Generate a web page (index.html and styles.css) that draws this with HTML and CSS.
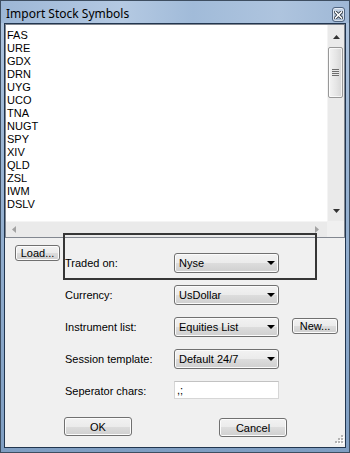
FILE: index.html
```html
<!DOCTYPE html>
<html lang="en">
<head>
  <meta charset="UTF-8" />
  <title>Import Stock Symbols</title>
  <meta name="viewport" content="width=device-width, initial-scale=1.0"/>
  <link rel="stylesheet" href="styles.css">
</head>
<body>

  <div class="window">

    <!-- Title bar -->
    <div class="titlebar">
      <span class="title">Import Stock Symbols</span>
      <div class="close-btn">
        <svg width="9" height="8" viewBox="0 0 9 8">
          <path d="M1.5 1 L7.5 7 M7.5 1 L1.5 7" stroke="#2c3640" stroke-width="3.2" stroke-linecap="square"/>
          <path d="M1.5 1 L7.5 7 M7.5 1 L1.5 7" stroke="#fff" stroke-width="1.6" stroke-linecap="square"/>
        </svg>
      </div>
    </div>

    <div class="client">

      <!-- Symbol list -->
      <div class="listbox">
        <ul class="items">
          <li>FAS</li>
          <li>URE</li>
          <li>GDX</li>
          <li>DRN</li>
          <li>UYG</li>
          <li>UCO</li>
          <li>TNA</li>
          <li>NUGT</li>
          <li>SPY</li>
          <li>XIV</li>
          <li>QLD</li>
          <li>ZSL</li>
          <li>IWM</li>
          <li>DSLV</li>
        </ul>
        <div class="vscroll">
          <div class="arrow-btn">
            <svg width="7" height="4" viewBox="0 0 7 4"><path d="M3.5 0 L7 4 L0 4 Z" fill="#333"/></svg>
          </div>
          <div class="thumb"><span class="grip"></span></div>
          <div class="track"></div>
          <div class="arrow-btn">
            <svg width="7" height="4" viewBox="0 0 7 4"><path d="M0 0 L7 0 L3.5 4 Z" fill="#333"/></svg>
          </div>
        </div>
        <div class="hscroll">
          <svg width="4" height="7" viewBox="0 0 4 7"><path d="M4 0 L4 7 L0 3.5 Z" fill="#a3a3a3"/></svg>
          <svg width="4" height="7" viewBox="0 0 4 7"><path d="M0 0 L4 3.5 L0 7 Z" fill="#a3a3a3"/></svg>
        </div>
        <div class="corner"></div>
      </div>

      <!-- Settings -->
      <div class="form">
        <button class="btn load-btn">Load...</button>

        <span class="lbl">Traded on:</span>
        <div class="combo">Nyse<span class="drop"></span></div>

        <span class="lbl">Currency:</span>
        <div class="combo">UsDollar<span class="drop"></span></div>

        <span class="lbl">Instrument list:</span>
        <div class="combo">Equities List<span class="drop"></span></div>
        <button class="btn new-btn">New...</button>

        <span class="lbl">Session template:</span>
        <div class="combo">Default 24/7<span class="drop"></span></div>

        <span class="lbl">Seperator chars:</span>
        <div class="textbox">,;</div>
      </div>

      <div class="actions">
        <button class="btn action-btn">OK</button>
        <button class="btn action-btn cancel-btn">Cancel</button>
      </div>

      <div class="highlight"></div>

      <svg class="size-grip" width="11" height="11" viewBox="0 0 11 11">
        <rect x="9" y="1" width="2" height="2" fill="#fff"/>
        <rect x="6" y="4" width="2" height="2" fill="#fff"/>
        <rect x="9" y="4" width="2" height="2" fill="#fff"/>
        <rect x="3" y="7" width="2" height="2" fill="#fff"/>
        <rect x="6" y="7" width="2" height="2" fill="#fff"/>
        <rect x="9" y="7" width="2" height="2" fill="#fff"/>
        <rect x="8" y="0" width="2" height="2" fill="#b4b4b4"/>
        <rect x="5" y="3" width="2" height="2" fill="#b4b4b4"/>
        <rect x="8" y="3" width="2" height="2" fill="#b4b4b4"/>
        <rect x="2" y="6" width="2" height="2" fill="#b4b4b4"/>
        <rect x="5" y="6" width="2" height="2" fill="#b4b4b4"/>
        <rect x="8" y="6" width="2" height="2" fill="#b4b4b4"/>
      </svg>
    </div>
  </div>

</body>
</html>
```

FILE: styles.css
```css
* { margin: 0; padding: 0; box-sizing: border-box; }
body { font-family: "Liberation Sans", Arial, sans-serif; font-size: 11px; color: #000; background: #fff; }

/* Window frame */
.window {
  width: 350px; height: 453px; display: flex; flex-direction: column;
  border: 1px solid #3e4e61; padding: 0 3px 4px;
  background: linear-gradient(to bottom, #b2c7e0 0%, #9cb6d4 30%, #7f9ec2 100%);
}

.titlebar {
  height: 22px; display: flex; justify-content: space-between; align-items: flex-start;
  padding-left: 2px; margin: 0 -3px; padding-right: 4px;
  background: linear-gradient(to right, #9db7d6 0%, #b4c9e2 35%, #a1bbd9 55%, #aec4de 80%, #9fb8d6 100%);
}
.title { font-family: "Noto Sans", sans-serif; font-size: 12px; line-height: 14px; margin-top: 6px; margin-left: 3px; color: #000; }

.close-btn {
  width: 13px; height: 15px; margin-top: 6px;
  border: 1px solid #4f6480; border-radius: 3px;
  background: linear-gradient(#c9d7e8, #9fb4cd);
  box-shadow: inset 0 0 0 1px rgba(255,255,255,0.55);
  display: flex; align-items: center; justify-content: center;
}

.client {
  flex: 1; position: relative; background: #f0f0f0;
  border: 1px solid #22364f;
}

/* List box */
.listbox {
  height: 214px; background: #fff; border: 1px solid #828790;
  display: grid; grid-template-columns: 1fr 17px; grid-template-rows: 196px 16px;
}
.items { list-style: none; padding: 4px 0 0 1px; line-height: 13px; overflow: hidden; }

.vscroll { background: #eaeaea; border-left: 1px solid #f4f4f4; display: flex; flex-direction: column; }
.arrow-btn { height: 21px; display: flex; align-items: center; justify-content: center; padding-left: 1px; }
.arrow-btn:first-child { padding-top: 3px; }
.thumb {
  height: 51px; margin: 1px 1px 0 0; border: 1px solid #989898; border-radius: 2px;
  background: linear-gradient(to right, #f4f4f4, #e4e4e4 60%, #d6d6d6);
  box-shadow: inset 0 0 0 1px rgba(255,255,255,0.7);
  display: flex; align-items: center; justify-content: center;
}
.grip {
  width: 7px; height: 7px;
  background: repeating-linear-gradient(to bottom, #6d6d6d 0, #6d6d6d 1px, #e8e8e8 1px, #e8e8e8 2px);
}
.track { flex: 1; }

.hscroll {
  background: #eaeaea; border-top: 1px solid #f4f4f4;
  display: flex; justify-content: space-between; align-items: center; padding: 0 8px 0 6px;
}
.corner { background: #f0f0f0; }

/* Form rows */
.form {
  display: grid; grid-template-columns: 50px 109px 105px 13px 46px;
  grid-auto-rows: 20px; row-gap: 12px; padding: 15px 0 0 10px; align-items: center;
}
.lbl { grid-column: 2; }
.combo, .textbox { grid-column: 3; }

.combo {
  height: 20px; position: relative; padding-left: 4px; line-height: 18px;
  border: 1px solid #707070; border-radius: 3px;
  background: linear-gradient(#f2f2f2 0%, #ebebeb 50%, #dddddd 50%, #cfcfcf 100%);
  box-shadow: inset 0 0 0 1px #fbfbfb;
}
.drop {
  position: absolute; right: 3px; top: 7px;
  border-left: 4px solid transparent; border-right: 4px solid transparent; border-top: 4px solid #000;
}

.textbox {
  height: 18px; align-self: start; padding-left: 2px; line-height: 16px;
  background: #fff; border: 1px solid #d6d6d6; border-top-color: #c2c2c2;
}

.btn {
  font: inherit; color: #000; cursor: pointer;
  border: 1px solid #707070; border-radius: 3px;
  background: linear-gradient(#f2f2f2 0%, #ebebeb 50%, #dddddd 50%, #cfcfcf 100%);
  box-shadow: inset 0 0 0 1px #fcfcfc;
}
.load-btn { grid-column: 1; height: 16px; width: 45px; align-self: start; margin-top: -8px; line-height: 12px; }
.new-btn { grid-column: 5; height: 16px; width: 46px; align-self: start; margin-top: 1px; line-height: 12px; }

.actions { display: flex; gap: 87px; padding-left: 59px; margin-top: 16px; }
.action-btn { width: 68px; height: 19px; }
.cancel-btn { margin-top: 1px; }

/* Overlays */
.highlight { position: absolute; left: 58px; top: 209px; width: 254px; height: 47px; border: 2px solid #363636; }
.size-grip { position: absolute; right: 1px; bottom: 1px; }
```
